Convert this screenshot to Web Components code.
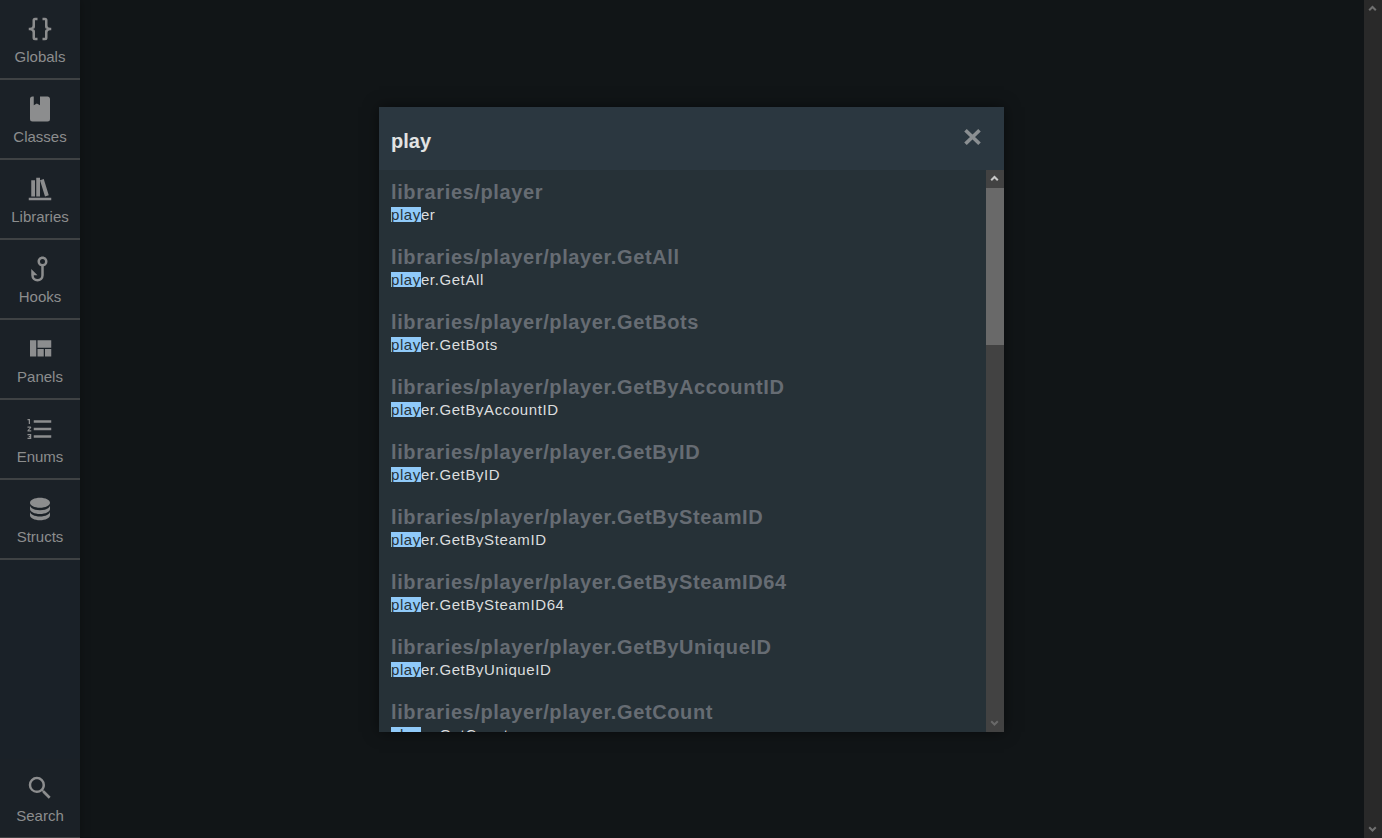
<!DOCTYPE html>
<html lang="en">
<head>
<meta charset="utf-8">
<title>Search</title>
<style>
html, body { margin: 0; height: 100%; overflow: hidden; background: #111517; font-family: "Liberation Sans", Arial, sans-serif; }
</style>
</head>
<body>
<wiki-app></wiki-app>
<script>
const ICONS = {
  braces: "M8,3A2,2 0 0,0 6,5V9A2,2 0 0,1 4,11H3V13H4A2,2 0 0,1 6,15V19A2,2 0 0,0 8,21H10V19H8V14A2,2 0 0,0 6,12A2,2 0 0,0 8,10V5H10V3M16,3A2,2 0 0,1 18,5V9A2,2 0 0,0 20,11H21V13H20A2,2 0 0,0 18,15V19A2,2 0 0,1 16,21H14V19H16V14A2,2 0 0,1 18,12A2,2 0 0,1 16,10V5H14V3H16Z",
  book: "M18,22A2,2 0 0,0 20,20V4C20,2.89 19.1,2 18,2H12V9L9.5,7.5L7,9V2H6A2,2 0 0,0 4,4V20A2,2 0 0,0 6,22H18Z",
  shelf: "M9 3V18H12V3H9M12 5L16 18L19 17L15 4L12 5M5 5V18H8V5H5M3 19V21H21V19H3Z",
  hook: "M18,6C18,7.82 16.76,9.41 15,9.86V17A5,5 0 0,1 10,22A5,5 0 0,1 5,17V12L10,17H7A3,3 0 0,0 10,20A3,3 0 0,0 13,17V9.86C11.23,9.4 10,7.8 10,5.97C10,3.76 11.8,2 14,2C16.22,2 18,3.79 18,6M14,8A2,2 0 0,0 16,6A2,2 0 0,0 14,4A2,2 0 0,0 12,6A2,2 0 0,0 14,8Z",
  quilt: "M10,5V11H21V5M16,18H21V12H16M4,18H9V5H4M10,18H15V12H10V18Z",
  list: "M7,13V11H21V13H7M7,19V17H21V19H7M7,7V5H21V7H7M3,8V5H2V4H4V8H3M2,17V16H5V20H2V19H4V18.5H3V17.5H4V17H2M4.25,10A0.75,0.75 0 0,1 5,10.75C5,10.95 4.92,11.14 4.79,11.27L3.12,13H5V14H2V13.08L4,11H2V10H4.25Z",
  database: "M12,3C7.58,3 4,4.79 4,7C4,9.21 7.58,11 12,11C16.42,11 20,9.21 20,7C20,4.79 16.42,3 12,3M4,9V12C4,14.21 7.58,16 12,16C16.42,16 20,14.21 20,12V9C20,11.21 16.42,13 12,13C7.58,13 4,11.21 4,9M4,14V17C4,19.21 7.58,21 12,21C16.42,21 20,19.21 20,17V14C20,16.21 16.42,18 12,18C7.58,18 4,16.21 4,14Z",
  magnify: "M9.5,3A6.5,6.5 0 0,1 16,9.5C16,11.11 15.41,12.59 14.44,13.73L14.71,14H15.5L20.5,19L19,20.5L14,15.5V14.71L13.73,14.44C12.59,15.41 11.11,16 9.5,16A6.5,6.5 0 0,1 3,9.5A6.5,6.5 0 0,1 9.5,3M9.5,5C7,5 5,7 5,9.5C5,12 7,14 9.5,14C12,14 14,12 14,9.5C14,7 12,5 9.5,5Z"
};
const define = (name, html) => customElements.define(name, class extends HTMLElement {
  constructor() {
    super();
    this.attachShadow({ mode: "open" }).innerHTML = html;
  }
});

customElements.define("nav-item", class extends HTMLElement {
  connectedCallback() {
    this.attachShadow({ mode: "open" }).innerHTML = `
<style>
:host { display: flex; flex-direction: column; align-items: center; box-sizing: border-box; height: 80px; padding-top: 14px; border-bottom: 2px solid #3f4244; background: #1b2127; color: #8c8d8e; font-size: 15px; line-height: 17px; flex: none; }
svg { display: block; width: 30px; height: 30px; fill: currentColor; margin-bottom: 4px; }
</style>
<svg viewBox="0 0 24 24"><path d="${ICONS[this.getAttribute("icon")]}"/></svg><slot></slot>`;
  }
});

define("side-bar", `
<style>
:host { display: flex; flex-direction: column; width: 80px; flex: none; background: #1a2128; box-shadow: 0 0 10px rgba(0,0,0,.3); }
.gap { flex: 1; }
</style>
<slot></slot><div class="gap"></div><slot name="end"></slot>`);

define("scroll-track", `
<style>
:host { display: flex; flex-direction: column; width: 18px; flex: none; background: var(--track); }
svg { display: block; width: 18px; height: 18px; fill: none; stroke-width: 2; }
.thumb { height: var(--thumb-h, 0px); background: #696969; }
.gap { flex: 1; }
.up { stroke: var(--up); } .down { stroke: var(--down); }
</style>
<svg class="up" viewBox="0 0 18 18"><path d="M5.200 10.300 8.500 7 11.800 10.300"/></svg>
<div class="thumb"></div><div class="gap"></div>
<svg class="down" viewBox="0 0 18 18"><path d="M5.200 7.200 8.500 10.500 11.800 7.200"/></svg>`);

customElements.define("search-result", class extends HTMLElement {
  connectedCallback() {
    this.attachShadow({ mode: "open" }).innerHTML = `
<style>
:host { display: block; height: 65px; padding-left: 12px; white-space: nowrap; }
.path { font-size: 20px; font-weight: bold; line-height: 23px; letter-spacing: .615px; color: #666c73; height: 26px; }
.text { font-size: 15px; line-height: 15px; height: 15px; overflow: hidden; letter-spacing: .6px; color: #dcdedf; }
mark { display: inline-block; height: 15px; background: #90caf9; color: #263238; }
</style>
<div class="path">${this.getAttribute("path")}</div>
<div class="text"><mark>play</mark><slot></slot></div>`;
  }
});

define("search-dialog", `
<style>
:host { display: flex; flex-direction: column; width: 625px; height: 625px; background: #263137; box-shadow: 0 0 14px rgba(0,0,0,.5); }
header { display: flex; justify-content: space-between; box-sizing: border-box; height: 63px; padding: 22px 22px 0 12px; background: #2b3740; color: #e2e3e3; font-size: 20px; font-weight: bold; line-height: 25px; flex: none; }
header svg { display: block; width: 19px; height: 18px; margin-top: -1px; stroke: #8b8f92; stroke-width: 3.6; }
.body { display: flex; flex: 1; min-height: 0; }
.list { flex: 1; min-width: 0; overflow: hidden; padding-top: 11px; }
scroll-track { --track: #424242; --up: #c6c6c6; --down: #696969; --thumb-h: 157px; }
</style>
<header><span>play</span><svg viewBox="0 0 19 18"><path d="M2.500 2.200 16.500 15.800M16.500 2.200 2.500 15.800"/></svg></header>
<div class="body"><div class="list"><slot></slot></div><scroll-track></scroll-track></div>`);

define("wiki-app", `
<style>
:host { display: flex; height: 838px; width: 1382px; background: #111517; }
main { flex: 1; display: flex; justify-content: center; align-items: flex-start; padding: 107px 61px 0 0; }
.page { --track: #292929; --up: #707070; --down: #707070; }
</style>
<side-bar>
<nav-item icon="braces">Globals</nav-item><nav-item icon="book">Classes</nav-item><nav-item icon="shelf">Libraries</nav-item><nav-item icon="hook">Hooks</nav-item><nav-item icon="quilt">Panels</nav-item><nav-item icon="list">Enums</nav-item><nav-item icon="database">Structs</nav-item>
<nav-item slot="end" icon="magnify" style="margin-bottom:-1px">Search</nav-item>
</side-bar>
<main><search-dialog>
<search-result path="libraries/player">er</search-result>
<search-result path="libraries/player/player.GetAll">er.GetAll</search-result>
<search-result path="libraries/player/player.GetBots">er.GetBots</search-result>
<search-result path="libraries/player/player.GetByAccountID">er.GetByAccountID</search-result>
<search-result path="libraries/player/player.GetByID">er.GetByID</search-result>
<search-result path="libraries/player/player.GetBySteamID">er.GetBySteamID</search-result>
<search-result path="libraries/player/player.GetBySteamID64">er.GetBySteamID64</search-result>
<search-result path="libraries/player/player.GetByUniqueID">er.GetByUniqueID</search-result>
<search-result path="libraries/player/player.GetCount">er.GetCount</search-result>
</search-dialog></main>
<scroll-track class="page"></scroll-track>`);
</script>
</body>
</html>
